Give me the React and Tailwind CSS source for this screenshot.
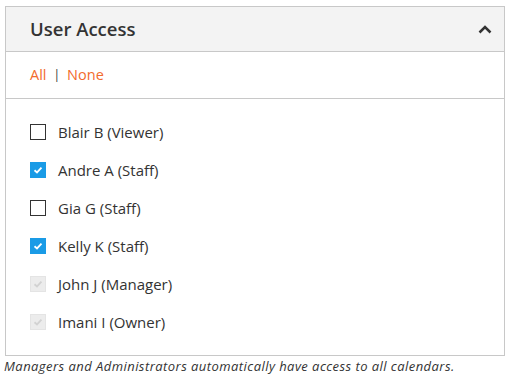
import React, { useState } from 'react';

const users = [
  { name: 'Blair B (Viewer)', checked: false },
  { name: 'Andre A (Staff)', checked: true },
  { name: 'Gia G (Staff)', checked: false },
  { name: 'Kelly K (Staff)', checked: true },
  { name: 'John J (Manager)', checked: true, locked: true },
  { name: 'Imani I (Owner)', checked: true, locked: true },
];

function Box({ checked, locked }) {
  if (locked) {
    return (
      <span className="w-[16px] h-[16px] bg-[#ececec] border border-[#e4e4e4] flex items-center justify-center">
        <svg width="10" height="8" viewBox="0 0 10 8" fill="none">
          <path d="M1.5 4.2 L4 6.4 L8.5 1.6" stroke="#d2d2d2" strokeWidth="1.8" />
        </svg>
      </span>
    );
  }
  if (checked) {
    return (
      <span className="w-[16px] h-[16px] bg-[#1a9be6] flex items-center justify-center">
        <svg width="10" height="8" viewBox="0 0 10 8" fill="none">
          <path d="M1.5 4.2 L4 6.4 L8.5 1.6" stroke="#fff" strokeWidth="1.8" />
        </svg>
      </span>
    );
  }
  return <span className="w-[16px] h-[16px] border-[1.5px] border-[#333] bg-white" />;
}

export default function App() {
  const [items] = useState(users);

  return (
    <div className="w-[511px] h-[378px] bg-white pt-[6px] pl-[5px]" style={{ fontFamily: '"Open Sans", Lato, sans-serif' }}>
      <div className="w-[500px] h-[350px] border border-[#c8c8c8] flex flex-col">
        {/* header */}
        <div className="h-[45px] bg-[#f3f3f3] border-b border-[#c8c8c8] flex items-center justify-between pl-[24px] pr-[11px]">
          <span className="text-[18.5px] font-semibold text-[#333]">User Access</span>
          <svg width="16" height="11" viewBox="0 0 16 11" fill="none">
            <path d="M2.5 8.5 L8 3 L13.5 8.5" stroke="#333" strokeWidth="2.5" />
          </svg>
        </div>

        {/* all / none */}
        <div className="h-[47px] border-b border-[#c8c8c8] flex items-center pl-[24px] text-[14.5px]">
          <span className="text-[#f26b2d]">All</span>
          <span className="text-[#333] text-[12px] mx-[7px]">|</span>
          <span className="text-[#f26b2d]">None</span>
        </div>

        {/* list */}
        <div className="flex flex-col pt-[14px] pl-[24px]">
          {items.map((u) => (
            <div key={u.name} className="h-[38px] flex items-center gap-[12px]">
              <Box checked={u.checked} locked={u.locked} />
              <span className="text-[15px] text-[#333]">{u.name}</span>
            </div>
          ))}
        </div>
      </div>
      <p className="italic text-[13px] text-[#333] mt-[1px] -ml-[1px] tracking-[0.45px]">
        Managers and Administrators automatically have access to all calendars.
      </p>
    </div>
  );
}
